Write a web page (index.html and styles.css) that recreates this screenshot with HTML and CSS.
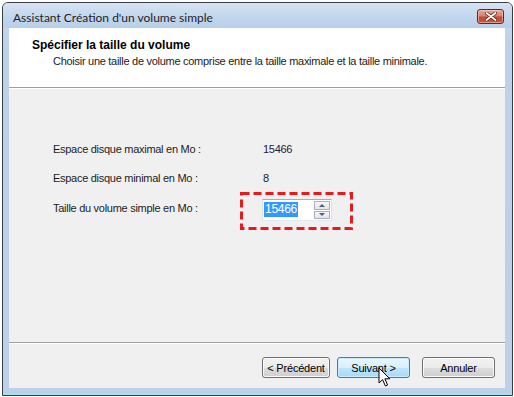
FILE: index.html
```html
<!DOCTYPE html>
<html lang="fr">
<head>
<meta charset="utf-8">
<title>Assistant Création d'un volume simple</title>
<link rel="stylesheet" href="styles.css">
</head>
<body>
<div class="window">
  <div class="titlebar">
    <span class="title">Assistant Création d'un volume simple</span>
    <button class="close" type="button" aria-label="Fermer">
      <svg width="12" height="9" viewBox="0 0 12 9">
        <path d="M1.5 1 L10.5 8 M10.5 1 L1.5 8" stroke="#5a1a10" stroke-width="3.2" stroke-linecap="round"/>
        <path d="M1.5 1 L10.5 8 M10.5 1 L1.5 8" stroke="#ffffff" stroke-width="1.8" stroke-linecap="round"/>
      </svg>
    </button>
  </div>
  <div class="client">
    <div class="header">
      <div class="h-title">Spécifier la taille du volume</div>
      <div class="h-sub">Choisir une taille de volume comprise entre la taille maximale et la taille minimale.</div>
    </div>
    <div class="body">
      <div class="form">
        <div class="label">Espace disque maximal en Mo :</div>
        <div class="value">15466</div>
        <div class="label">Espace disque minimal en Mo :</div>
        <div class="value">8</div>
        <div class="label label-top">Taille du volume simple en Mo :</div>
        <div class="value">
          <div class="spin">
            <div class="spin-field"><span class="sel">15466</span></div>
            <div class="spin-btns">
              <div class="spin-btn"><span class="tri-up"></span></div>
              <div class="spin-btn"><span class="tri-down"></span></div>
            </div>
            <svg class="mark" width="113" height="38" viewBox="0 0 113 38">
              <rect x="1.5" y="1.5" width="110" height="35" fill="none" stroke="#e61b1b" stroke-width="3" stroke-dasharray="8 4"/>
            </svg>
          </div>
        </div>
      </div>
    </div>
    <div class="footer">
      <button class="btn btn-prev" type="button">&lt; Précédent</button>
      <button class="btn btn-next" type="button">Suivant &gt;</button>
      <button class="btn btn-cancel" type="button">Annuler</button>
    </div>
  </div>
  <svg class="cursor" width="14" height="21" viewBox="0 0 14 21">
    <path d="M1 1 L1 16 L4.6 12.6 L7.4 19 L9.6 18 L6.9 11.8 L11.8 11.8 Z" fill="#ffffff" stroke="#000000" stroke-width="1" stroke-linejoin="miter"/>
  </svg>
</div>
</body>
</html>
```

FILE: styles.css
```css
html, body {
  margin: 0;
  padding: 0;
  background: #ffffff;
}

body {
  font-family: "Liberation Sans", Arial, sans-serif;
  font-size: 11px;
  letter-spacing: -0.28px;
  color: #1c1c1c;
}

.window {
  position: relative;
  margin: 2px 0 0 2px;
  width: 511px;
  height: 394px;
  box-sizing: border-box;
  border: 1px solid #3a3d42;
  border-radius: 6px 6px 0 0;
  background: linear-gradient(to bottom, #c9dbee 0px, #bcd2ea 40px, #bcd1e8 100%);
  padding: 0 7px 7px 6px;
  display: flex;
  flex-direction: column;
  box-shadow: inset 0 -2px 0 #a6e0f4;
}

.titlebar {
  height: 25px;
  flex: none;
  display: flex;
  align-items: center;
  justify-content: space-between;
  background: linear-gradient(to bottom, #d6e4f3 0%, #c2d6ec 55%, #b7cfe9 100%);
  margin: 0 -7px 0 -6px;
  padding-left: 10px;
  padding-right: 8px;
  border-radius: 5px 5px 0 0;
}

.title {
  font-family: "Lato", "Noto Sans", sans-serif;
  font-size: 12px;
  letter-spacing: 0;
  color: #1e1e1e;
  padding-top: 3px;
}

.close {
  width: 27px;
  height: 15px;
  margin-top: 2px;
  padding: 0;
  border: 1px solid #6b2418;
  border-radius: 3px;
  background: linear-gradient(to bottom, #e6a99c 0%, #d7826f 45%, #c24a33 55%, #c9583d 100%);
  box-shadow: inset 0 0 0 1px rgba(255, 210, 200, 0.55);
  display: flex;
  align-items: center;
  justify-content: center;
}

.client {
  flex: 1;
  display: flex;
  flex-direction: column;
  background: #f0f0f0;
}

.header {
  height: 59px;
  flex: none;
  background: #ffffff;
  border-bottom: 1px solid #a0a0a0;
  box-shadow: 0 1px 0 #ffffff;
  box-sizing: content-box;
}

.h-title {
  font-weight: bold;
  font-size: 12px;
  letter-spacing: 0;
  color: #000000;
  margin: 10px 0 0 23px;
  line-height: 14px;
}

.h-sub {
  margin: 3px 0 0 44px;
  line-height: 13px;
  color: #222222;
}

.body {
  flex: 1;
  margin-top: 1px;
  border-bottom: 1px solid #a0a0a0;
  box-shadow: 0 1px 0 #ffffff;
}

.form {
  display: grid;
  grid-template-columns: 210px auto;
  grid-template-rows: 16px 16px 22px;
  row-gap: 13px;
  padding: 52px 0 0 44px;
  align-items: center;
}

.label-top {
  align-self: start;
  padding-top: 3px;
}

.value {
  color: #1c1c30;
}

.spin {
  position: relative;
  margin-left: -1px;
  width: 70px;
  height: 22px;
  box-sizing: border-box;
  border: 1px solid #abadb3;
  border-left-color: #e2e3ea;
  border-right-color: #dbdfe6;
  border-bottom-color: #e3e9ef;
  background: #ffffff;
  display: flex;
}

.spin-field {
  flex: 1;
  padding: 2px 0 0 1px;
}

.sel {
  display: inline-block;
  background: #3399ff;
  color: #ffffff;
  font-size: 12px;
  line-height: 15px;
  padding: 0 1px;
}

.spin-btns {
  width: 16px;
  display: flex;
  flex-direction: column;
  gap: 1px;
  padding: 1px 1px 1px 0;
}

.spin-btn {
  flex: 1;
  box-sizing: border-box;
  border: 1px solid #a8b2c2;
  background: linear-gradient(to bottom, #f6f6f6, #e4e4e4);
  display: flex;
  align-items: center;
  justify-content: center;
}

.tri-up {
  width: 0;
  height: 0;
  border-left: 3px solid transparent;
  border-right: 3px solid transparent;
  border-bottom: 3px solid #4f5c86;
}

.tri-down {
  width: 0;
  height: 0;
  border-left: 3px solid transparent;
  border-right: 3px solid transparent;
  border-top: 3px solid #4f5c86;
}

.mark {
  position: absolute;
  left: -23px;
  top: -8px;
}

.footer {
  height: 44px;
  flex: none;
  margin-top: 1px;
  display: flex;
  justify-content: flex-end;
  align-items: flex-start;
  padding: 13px 10px 0 0;
  box-sizing: border-box;
}

.btn {
  height: 21px;
  width: 73px;
  padding: 0;
  font-family: "Liberation Sans", Arial, sans-serif;
  font-size: 11px;
  letter-spacing: -0.2px;
  color: #000000;
  border: 1px solid #707070;
  border-radius: 3px;
  background: linear-gradient(to bottom, #f2f2f2 0%, #ebebeb 50%, #dddddd 51%, #cfcfcf 100%);
  box-shadow: inset 0 0 0 1px #fbfbfb;
}

.btn-prev {
  width: 68px;
  margin-right: 7px;
}

.btn-next {
  margin-right: 12px;
  border-color: #3c7fb1;
  background: linear-gradient(to bottom, #eaf6fd 0%, #d9f0fc 50%, #bee6fd 51%, #a7d9f5 100%);
  box-shadow: inset 0 0 0 1px #c8ecfc;
}

.cursor {
  position: absolute;
  left: 375px;
  top: 364px;
}
```
